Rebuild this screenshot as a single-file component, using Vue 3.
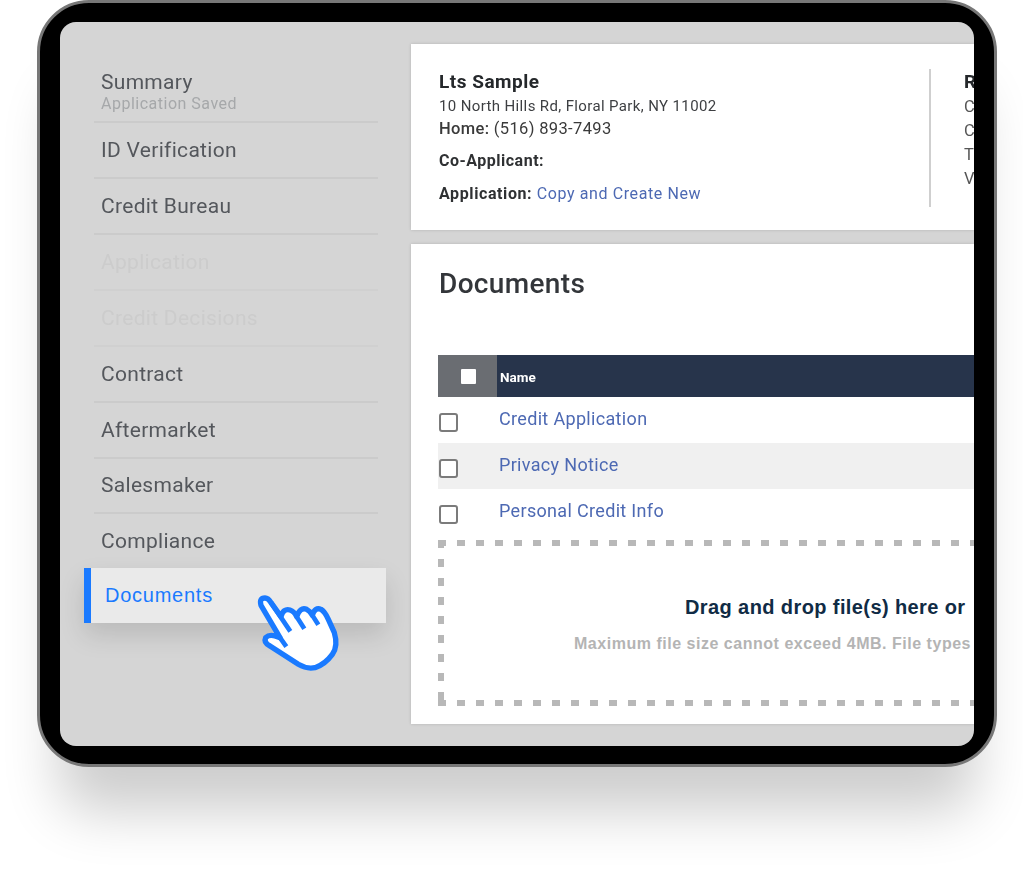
<script setup>
const navItems = [
  { label: 'ID Verification' },
  { label: 'Credit Bureau' },
  { label: 'Application', disabled: true },
  { label: 'Credit Decisions', disabled: true },
  { label: 'Contract' },
  { label: 'Aftermarket' },
  { label: 'Salesmaker' },
  { label: 'Compliance' },
]
const docs = ['Credit Application', 'Privacy Notice', 'Personal Credit Info']
const rightCol = ['C', 'C', 'T', 'V']
</script>

<template>
  <div class="page">
    <div class="device">
      <div class="screen">
        <aside class="sidebar">
          <div class="nav-row summary">
            <span class="nav-label soft">Summary</span>
            <span class="nav-sub soft">Application Saved</span>
          </div>
          <div
            v-for="item in navItems"
            :key="item.label"
            class="nav-row"
            :class="{ disabled: item.disabled }"
          >
            <span class="nav-label soft">{{ item.label }}</span>
          </div>
          <div class="nav-active">
            <span>Documents</span>
            <svg class="hand" viewBox="0 0 315 270" width="105" height="90">
              <path
                d="M105 155 L48 58 Q42 36 60 36 Q70 36 78 50 L108 92 Q115 66 135 72 Q148 76 155 92 Q165 62 185 70 Q195 75 202 88 Q210 62 228 70 Q240 78 250 100 L268 140 Q280 180 262 205 Q240 235 210 245 Q185 250 160 235 L75 180 Q55 170 62 155 Q72 145 90 150 Z"
                fill="#fff"
                stroke="#1a7aff"
                stroke-width="16"
                stroke-linejoin="round"
              />
              <path
                d="M78 50 L136 136 M155 92 L178 128 M202 88 L220 116 M105 155 L124 182"
                fill="none"
                stroke="#1a7aff"
                stroke-width="14"
                stroke-linecap="butt"
              />
            </svg>
          </div>
        </aside>

        <main class="main">
          <section class="card info">
            <div class="info-left soft">
              <div class="name">Lts Sample</div>
              <div class="address">10 North Hills Rd, Floral Park, NY 11002</div>
              <div class="home"><b>Home:</b> (516) 893-7493</div>
              <div class="co"><b>Co-Applicant:</b></div>
              <div class="app"><b>Application:</b> <span class="link">Copy and Create New</span></div>
            </div>
            <div class="info-right soft">
              <div class="r-head">R</div>
              <div v-for="(c, i) in rightCol" :key="i" class="r-line">{{ c }}</div>
            </div>
          </section>

          <section class="card docs">
            <h2 class="title soft">Documents</h2>
            <div class="thead">
              <div class="thead-check"><span class="white-box"></span></div>
              <div class="thead-name soft">Name</div>
            </div>
            <div v-for="(d, i) in docs" :key="d" class="trow" :class="{ striped: i === 1 }">
              <span class="box"></span>
              <span class="link doc soft">{{ d }}</span>
            </div>
            <div class="drop">
              <div class="drop-title">Drag and drop file(s) here or</div>
              <div class="drop-sub">Maximum file size cannot exceed 4MB. File types</div>
            </div>
          </section>
        </main>
      </div>
    </div>
  </div>
</template>

<style>
html, body { margin: 0; background: #fff; }
</style>

<style scoped>
.page {
  width: 1023px;
  height: 893px;
  overflow: hidden;
  padding-left: 37px;
  box-sizing: border-box;
  font-family: Roboto, "Liberation Sans", sans-serif;
}
.device {
  width: 960px;
  height: 767px;
  box-sizing: border-box;
  background: #000;
  border: 3px solid #777;
  border-radius: 52px;
  padding: 19px 20px 18px 20px;
  box-shadow: 0 66px 56px -22px rgba(0, 0, 0, 0.2);
}
.screen {
  display: flex;
  width: 914px;
  height: 724px;
  background: #d5d5d5;
  border-radius: 16px;
  overflow: hidden;
}
.soft { filter: blur(0.5px); }

.sidebar {
  width: 351px;
  flex: none;
  box-sizing: border-box;
  padding: 44px 0 0 34px;
}
.nav-row {
  width: 284px;
  height: 56px;
  box-sizing: border-box;
  border-bottom: 2px solid #cbcbcb;
  padding-left: 7px;
  display: flex;
  flex-direction: column;
  justify-content: center;
  color: #54575c;
}
.nav-row:nth-child(n+2) { padding-bottom: 1px; }
.nav-row.summary { height: 57px; justify-content: flex-start; padding-top: 4px; }
.nav-label { font-size: 21px; line-height: 24px; letter-spacing: 0.3px; }
.nav-sub { font-size: 16px; line-height: 18px; color: #a6a8aa; letter-spacing: 0.5px; margin-top: 1px; }
.nav-row.disabled { color: #cccccc; border-bottom-color: #d0d0d0; }
.nav-row:nth-child(8) { height: 55px; }
.nav-active {
  position: relative;
  width: 302px;
  height: 55px;
  margin: -2px 0 0 -10px;
  box-sizing: border-box;
  border-left: 7px solid #1a7aff;
  background: #eaeaea;
  padding: 14px 0 0 14px;
  color: #1a7aff;
  font: 20px/26px "Liberation Sans", sans-serif;
  letter-spacing: 0.75px;
  box-shadow: 0 12px 26px rgba(0, 0, 0, 0.13);
}
.hand { position: absolute; left: 154px; top: 18px; }

.main {
  flex: 1;
  min-width: 0;
  padding-top: 22px;
}
.card {
  background: #fff;
  box-shadow: 0 0 3px rgba(0, 0, 0, 0.16);
  overflow: hidden;
  box-sizing: border-box;
}
.info {
  height: 186px;
  display: flex;
  padding: 25px 0 0 28px;
  color: #2b2b2b;
  white-space: nowrap;
}
.info-left {
  width: 490px;
  height: 138px;
  flex: none;
}
.name { font-size: 19px; font-weight: 700; line-height: 26px; color: #25282b; letter-spacing: 0.5px; }
.address { font-size: 15px; line-height: 20px; color: #3d3f42; margin-top: 1px; letter-spacing: 0.37px; }
.home { font-size: 16.5px; line-height: 24px; color: #3a3a3a; margin-top: 1px; letter-spacing: 0.35px; }
.home b, .co b, .app b { font-weight: 500; }
.co { font-size: 16px; line-height: 24px; margin-top: 8px; letter-spacing: 0.5px; }
.co b, .app b { font-weight: 700; color: #2f3133; }
.app { font-size: 16px; line-height: 24px; margin-top: 9px; letter-spacing: 0.6px; }
.link { color: #4d69b3; font-weight: 400; }
.info-right {
  border-left: 2px solid #cfcfcf;
  height: 138px;
  padding-left: 33px;
  box-sizing: border-box;
  flex: none;
}
.r-head { font-size: 19px; font-weight: 700; line-height: 26px; color: #25282b; }
.r-line { font-size: 16.5px; line-height: 24px; color: #555; }

.docs {
  height: 480px;
  margin-top: 14px;
  padding: 22px 0 0 28px;
}
.title {
  margin: 0;
  font-size: 28px;
  font-weight: 500;
  line-height: 36px;
  color: #33363a;
  letter-spacing: 0.35px;
}
.thead {
  display: flex;
  height: 42px;
  margin-top: 53px;
  margin-left: -1px;
}
.thead-check {
  width: 59px;
  background: #6a6d72;
  display: flex;
  align-items: center;
  justify-content: center;
  padding-left: 2px;
  box-sizing: border-box;
}
.white-box { width: 15px; height: 15px; background: #fff; border-radius: 1px; }
.thead-name {
  flex: 1;
  background: #27344b;
  color: #fff;
  font-size: 13.5px;
  font-weight: 700;
  line-height: 44px;
  padding-left: 3px;
}
.trow {
  height: 46px;
  display: flex;
  margin-left: -1px;
  padding-left: 1px;
  box-sizing: border-box;
}
.trow.striped { background: #f0f0f0; }
.box {
  width: 19px;
  height: 19px;
  box-sizing: border-box;
  border: 2px solid #7b7b7b;
  border-radius: 3px;
  margin-top: 16px;
  background: #fff;
}
.doc {
  margin-left: 41px;
  font-size: 18px;
  line-height: 44px;
  letter-spacing: 0.33px;
}
.drop {
  height: 166px;
  margin-top: 5px;
  margin-left: -1px;
  box-sizing: border-box;
  padding: 54px 0 0 136px;
  white-space: nowrap;
  font-family: "Liberation Sans", sans-serif;
  background-image:
    repeating-linear-gradient(90deg, #b8b8b8 0 8px, transparent 8px 19px),
    repeating-linear-gradient(90deg, #b8b8b8 0 8px, transparent 8px 19px),
    repeating-linear-gradient(180deg, #b8b8b8 0 8px, transparent 8px 19px);
  background-size: 100% 6px, 100% 6px, 6px 100%;
  background-position: 0 0, 0 100%, 0 0;
  background-repeat: no-repeat;
}
.drop-title {
  font-size: 20px;
  font-weight: 700;
  line-height: 26px;
  color: #102b45;
  padding-left: 111px;
  letter-spacing: 0.4px;
}
.drop-sub {
  font-size: 16px;
  font-weight: 700;
  line-height: 20px;
  color: #b4b4b4;
  margin-top: 14px;
  letter-spacing: 0.52px;
}
</style>
